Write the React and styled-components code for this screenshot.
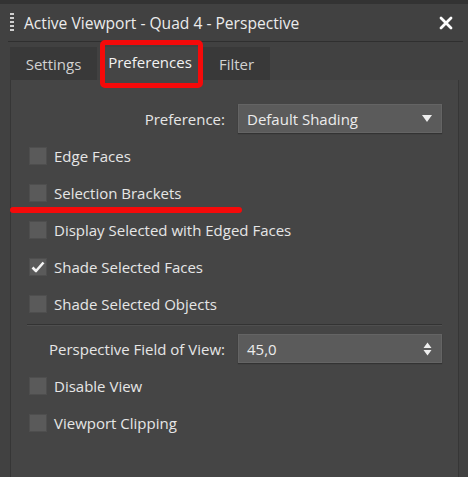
import styled, { createGlobalStyle } from 'styled-components'

const GlobalStyle = createGlobalStyle`
  html, body {
    margin: 0;
    padding: 0;
    background: #414141;
  }
  body {
    font-family: "Open Sans", "Noto Sans", sans-serif;
    color: #e6e6e6;
  }
`

const Window = styled.div`
  position: relative;
  width: 468px;
  height: 477px;
  overflow: hidden;
  background: #414141;
`

const TopStrip = styled.div`
  height: 4px;
  background: #333;
`

const TitleBar = styled.div`
  display: flex;
  align-items: center;
  height: 37px;
  margin: 0 5px 0 8px;
  border-bottom: 1px solid #2f2f2f;
`

const Grip = styled.div`
  width: 4px;
  height: 20px;
  margin: 0 10px 0 2px;
  background: repeating-linear-gradient(to bottom, #cfcfcf 0 2px, transparent 2px 4px);
`

const Title = styled.div`
  flex: 1;
  font-size: 15.6px;
  color: #ececec;
`

const Close = styled.button`
  width: 22px;
  height: 22px;
  margin-right: 6px;
  padding: 0;
  border: 0;
  background: none;
  display: flex;
  align-items: center;
  justify-content: center;
`

const Tabs = styled.div`
  display: flex;
  gap: 3px;
  margin: 5px 0 0 10px;
  height: 33px;
`

const Tab = styled.div`
  display: flex;
  align-items: center;
  justify-content: center;
  width: ${p => p.$w}px;
  font-size: 15px;
  color: ${p => (p.$active ? '#f2f2f2' : '#d2d2d2')};
  background: ${p => (p.$active ? '#454545' : '#393939')};
  padding-bottom: ${p => (p.$active ? 4 : 0)}px;
`

const Highlight = styled.div`
  position: absolute;
  left: 100px;
  top: 40px;
  width: 93px;
  height: 38px;
  border: 5px solid #f50a0a;
  border-radius: 5px;
`

const Underline = styled.div`
  position: absolute;
  left: 10px;
  top: 207px;
  width: 232px;
  height: 6px;
  border-radius: 3px;
  background: #f50a0a;
`

const Panel = styled.div`
  margin: 0 9px 0 10px;
  height: 400px;
  background: #454545;
  border-left: 1px solid #363636;
  border-right: 1px solid #363636;
  padding: 20px 16px 0 17px;
`

const FieldRow = styled.div`
  display: grid;
  grid-template-columns: minmax(0, 1fr) 204px;
  column-gap: 13px;
  align-items: center;
  height: 37px;
`

const FieldLabel = styled.div`
  text-align: right;
  font-size: 15px;
  white-space: nowrap;
`

const Field = styled.div`
  display: flex;
  align-items: center;
  justify-content: space-between;
  height: 29px;
  box-sizing: border-box;
  padding: 0 9px 0 8px;
  background: #5b5b5b;
  border: 1px solid #646464;
  box-shadow: 0 1px 1px #333;
  font-size: 15px;
  color: #ececec;
`

const CheckRow = styled.label`
  display: flex;
  align-items: center;
  gap: 7px;
  height: 37px;
  padding-left: 1px;
  font-size: 15px;
`

const Box = styled.span`
  display: flex;
  align-items: center;
  justify-content: center;
  width: 18px;
  height: 18px;
  box-sizing: border-box;
  background: #5a5a5a;
  border: 1px solid #4e4e4e;
`

const Separator = styled.div`
  height: 1px;
  margin: 2px 0 5px -1px;
  background: #333;
  box-shadow: 0 1px 0 #4f4f4f;
`

function Check({ checked, children }) {
  return (
    <CheckRow>
      <Box>
        {checked && (
          <svg width="14" height="12" viewBox="0 0 14 12">
            <path d="M1.5 6.5 L5 10 L12.5 1.5" fill="none" stroke="#f4f4f4" strokeWidth="2.6" strokeLinejoin="round" />
          </svg>
        )}
      </Box>
      {children}
    </CheckRow>
  )
}

export default function App() {
  return (
    <>
      <GlobalStyle />
      <Window>
        <TopStrip />
        <TitleBar>
          <Grip />
          <Title>Active Viewport - Quad 4 - Perspective</Title>
          <Close aria-label="Close">
            <svg width="14" height="14" viewBox="0 0 14 14">
              <path d="M2 2 L12 12 M12 2 L2 12" stroke="#fff" strokeWidth="2.8" strokeLinecap="round" />
            </svg>
          </Close>
        </TitleBar>

        {/* Tabs */}
        <Tabs>
          <Tab $w={87}>Settings</Tab>
          <Tab $w={100} $active>Preferences</Tab>
          <Tab $w={67}>Filter</Tab>
        </Tabs>

        {/* Preferences panel */}
        <Panel>
          <FieldRow>
            <FieldLabel>Preference:</FieldLabel>
            <Field>
              Default Shading
              <svg width="10" height="8" viewBox="0 0 10 8">
                <path d="M0 0 L10 0 L5 7 Z" fill="#eee" />
              </svg>
            </Field>
          </FieldRow>
          <Check>Edge Faces</Check>
          <Check>Selection Brackets</Check>
          <Check>Display Selected with Edged Faces</Check>
          <Check checked>Shade Selected Faces</Check>
          <Check>Shade Selected Objects</Check>
          <Separator />
          <FieldRow>
            <FieldLabel>Perspective Field of View:</FieldLabel>
            <Field>
              45,0
              <svg width="9" height="14" viewBox="0 0 9 14">
                <path d="M0.5 6 L4.5 0.5 L8.5 6 Z M0.5 8 L8.5 8 L4.5 13.5 Z" fill="#eee" />
              </svg>
            </Field>
          </FieldRow>
          <Check>Disable View</Check>
          <Check>Viewport Clipping</Check>
        </Panel>

        {/* Annotations */}
        <Highlight />
        <Underline />
      </Window>
    </>
  )
}
